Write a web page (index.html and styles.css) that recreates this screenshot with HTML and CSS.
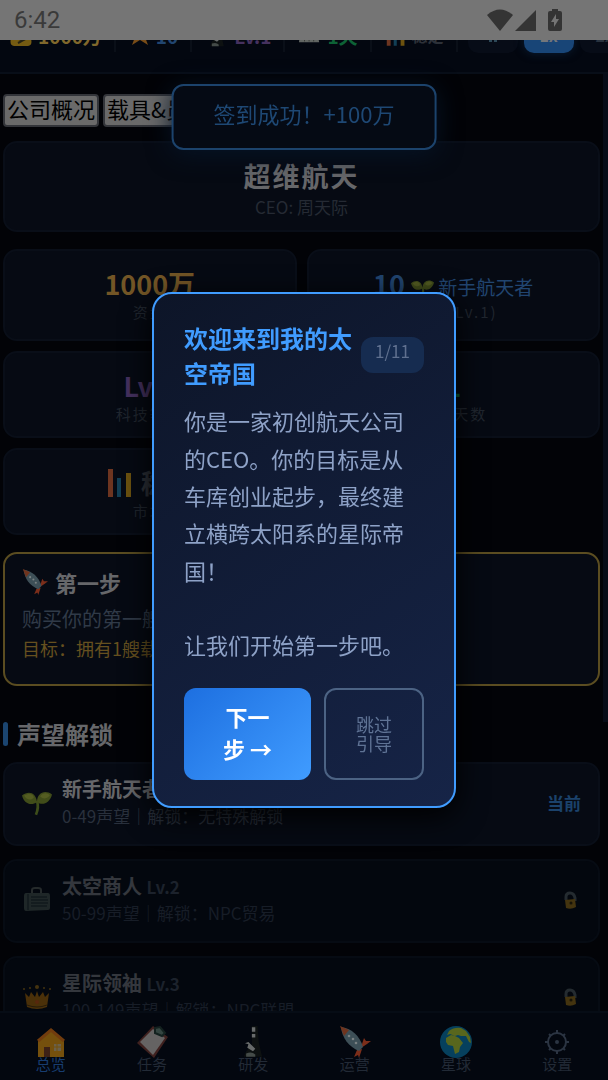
FILE: index.html
```html
<!DOCTYPE html>
<html lang="zh-CN">
<head>
    <meta charset="UTF-8">
    <meta name="viewport" content="width=device-width, initial-scale=1.0">
    <title>我的太空帝国</title>
    <link rel="stylesheet" href="styles.css">
</head>
<body>
    <!-- shared icons -->
    <svg class="sprite" aria-hidden="true">
        <symbol id="i-rocket" viewBox="0 0 32 32">
            <path fill="#7c2e1a" d="M18 24l-3 7 4-2 1 3 3-9zM23 18l2-6 2 3 5 0-4 3-6 4z"/>
            <path fill="#3d4f57" d="M2 1c10 1 19 9 22 20l-4 4C10 21 3 12 2 1z"/>
            <path fill="#6f341e" d="M1 0l9 4-5 6z"/>
            <circle cx="10" cy="10" r="1.3" fill="#788082"/><circle cx="14" cy="13" r="1.3" fill="#788082"/><circle cx="17" cy="17" r="1.3" fill="#788082"/>
        </symbol>
        <symbol id="i-seed" viewBox="0 0 28 24">
            <path d="M14 10q2 6-1 13" fill="none" stroke="#3d4d1a" stroke-width="2.5"/>
            <path fill="#414d1a" d="M14 11C9 15 2 13 0 5c6-5 13-3 14 6zM14 11c0-8 7-12 14-7-2 8-9 11-14 7z"/>
            <path fill="#545d22" d="M2 5c5-3 9-1 9 2-3 3-7 2-9-2zM17 6c2-4 7-4 9-1-3 3-6 4-9 1z"/>
        </symbol>
        <symbol id="i-chart" viewBox="0 0 26 30">
            <path fill="#6d3520" d="M1 1h5v28H1z"/><path fill="#123f55" d="M10 10h4v19h-4z"/><path fill="#6c520f" d="M19 5h5v24h-5z"/>
        </symbol>
        <symbol id="i-lock" viewBox="0 0 14 18">
            <path d="M3 9V6q0-4 4-4t5 5v3" fill="none" stroke="#242b30" stroke-width="3"/>
            <path fill="#44340f" d="M2 9l10-1 1 8q-5 3-10 1z"/><circle cx="8" cy="12" r="1.5" fill="#171308"/>
        </symbol>
        <symbol id="i-microscope" viewBox="0 0 20 28">
            <path fill="#0d1111" d="M9 0h5l1 14 3 13H2l2-5 5-5z"/>
            <path fill="#686b6b" d="M9 1h3v4H9zM9 7h3v3H9zM3 15l3-1 6 6-2 2-5-3 1-3z"/>
            <path fill="#444b48" d="M4 24q5-2 8 1v2H4z"/>
        </symbol>
    </svg>

    <div class="statusbar">
        <span>6:42</span>
        <span class="status-icons">
            <svg width="26" height="22" viewBox="0 0 26 22"><path d="M0 6Q13-5 26 6L13 22z"/></svg>
            <svg width="21" height="21" viewBox="0 0 21 21"><path d="M21 0v21H0z"/></svg>
            <svg class="battery" width="14" height="22" viewBox="0 0 14 22"><path d="M4 0h6v2h2q2 0 2 2v16q0 2-2 2H2q-2 0-2-2V4q0-2 2-2h2z"/><path fill="#757575" d="M8 5l-5 8h3v5l5-8H8z"/></svg>
        </span>
    </div>

    <header class="topbar">
        <div class="stat gold"><svg width="22" height="22" viewBox="0 0 22 22"><path fill="#755b12" d="M7 0h8l-1 5c8 6 10 17 4 17H4c-6 0-4-11 4-17z"/><path fill="none" stroke="#262313" stroke-width="2" d="M14 9q-6-2-6 3t6 3-6 4"/></svg>1000万</div>
        <div class="stat blue"><svg width="20" height="20" viewBox="0 0 20 20"><path fill="#784c18" d="M10 0l3 7h7l-5 5 3 8-8-5-8 5 3-8-5-5h7z"/></svg>10</div>
        <div class="stat purple"><svg width="22" height="24"><use href="#i-microscope"/></svg>Lv.1</div>
        <div class="stat green"><svg width="22" height="20" viewBox="0 0 24 20"><path fill="#626663" d="M2 2h17l3 16H0z"/><path stroke="#343735" d="M2 7h18M1 12h20M6 3v14M11 3v14M16 3v14"/></svg>1天</div>
        <div class="stat muted"><svg width="20" height="24"><use href="#i-chart"/></svg>稳定</div>
        <div class="speed">
            <button aria-label="暂停"><svg width="10" height="12" viewBox="0 0 10 12"><path fill="#2d4857" d="M1 0h3v12H1zM6 0h3v12H6z"/></svg></button>
            <button class="active">1x</button>
            <button>2x</button>
        </div>
    </header>

    <main>
        <div class="tabs">
            <button>公司概况</button>
            <button>载具&amp;员工</button>
            <button>市场情报</button>
            <button>财务与报表</button>
        </div>

        <section class="card company">
            <h1>超维航天</h1>
            <p>CEO: 周天际</p>
        </section>

        <section class="stats">
            <div class="card stat-card tall">
                <div class="value gold">1000万</div>
                <div class="label">资金</div>
            </div>
            <div class="card stat-card tall">
                <div class="value blue">10 <small><svg width="23" height="20"><use href="#i-seed"/></svg> 新手航天者</small></div>
                <div class="label">声望 (Lv.1)</div>
            </div>
            <div class="card stat-card">
                <div class="value purple">Lv.1</div>
                <div class="label">科技等级</div>
            </div>
            <div class="card stat-card">
                <div class="value green">1</div>
                <div class="label">运营天数</div>
            </div>
            <div class="card stat-card">
                <div class="value muted"><svg width="30" height="30"><use href="#i-chart"/></svg> 稳定</div>
                <div class="label">市场</div>
            </div>
        </section>

        <section class="card goal">
            <h3><svg width="26" height="26"><use href="#i-rocket"/></svg>第一步</h3>
            <p>购买你的第一艘载具</p>
            <p class="target">目标：拥有1艘载具</p>
        </section>

        <h2>声望解锁</h2>
        <ul class="unlocks">
            <li class="card unlock">
                <svg width="30" height="26"><use href="#i-seed"/></svg>
                <div class="info">
                    <h4>新手航天者 <span>Lv.1</span></h4>
                    <p>0-49声望｜解锁：无特殊解锁</p>
                </div>
                <strong>当前</strong>
            </li>
            <li class="card unlock locked">
                <svg width="30" height="26" viewBox="0 0 30 26"><path fill="none" stroke="#252a2b" stroke-width="2" d="M10 6V3q0-2 3-2h3q3 0 3 2v3"/><path fill="#1f2728" d="M4 6h22q2 0 2 3v12q0 2-2 2L4 24q-2 0-2-3V9q0-3 2-3z"/><path stroke="#0b1217" d="M6 7v16M9 10h16M9 13h17M9 16h17M9 19h16"/></svg>
                <div class="info">
                    <h4>太空商人 <span>Lv.2</span></h4>
                    <p>50-99声望｜解锁：NPC贸易</p>
                </div>
                <svg width="14" height="18"><use href="#i-lock"/></svg>
            </li>
            <li class="card unlock locked">
                <svg width="30" height="26" viewBox="0 0 30 26"><path fill="#4a3009" d="M3 9l4 4 2-5 4 5 2-6 2 6 4-5 2 5 4-4-2 14q-10 4-20 0z"/><g fill="#45330f"><circle cx="2" cy="5" r="1"/><circle cx="8" cy="4" r="1"/><circle cx="15" cy="3" r="2"/><circle cx="22" cy="4" r="1"/><circle cx="28" cy="5" r="1"/></g><path stroke="#271c09" fill="none" d="M5 21q10 4 20 0"/><circle cx="15" cy="18" r="2" fill="#58270d"/></svg>
                <div class="info">
                    <h4>星际领袖 <span>Lv.3</span></h4>
                    <p>100-149声望｜解锁：NPC联盟</p>
                </div>
                <svg width="14" height="18"><use href="#i-lock"/></svg>
            </li>
        </ul>
    </main>

    <div class="scrollbar"></div>

    <nav>
        <a href="#" class="active"><svg width="32" height="32" viewBox="0 0 32 32"><path fill="#75500d" d="M3 14L16 3l13 11v17H3z"/><path fill="none" stroke="#713c0e" stroke-width="3" d="M3 15L16 4l13 11"/><path fill="#3d2116" d="M9 21h6v10H9z"/><path fill="#6a604b" d="M19 18h7v7h-7z"/><path stroke="#75500d" d="M22 18v7M19 21h7"/></svg>总览</a>
        <a href="#"><svg width="32" height="32" viewBox="0 0 32 32"><path fill="#3f211f" d="M17 0l15 11-14 21L1 17z"/><path fill="#656363" d="M17 3l12 9-12 17L4 16z"/><path fill="#344541" stroke="#13211f" stroke-width="2" d="M19 2l5-1 5 6-3 3-7-3z"/></svg>任务</a>
        <a href="#"><svg width="32" height="30"><use href="#i-microscope"/></svg>研发</a>
        <a href="#"><svg width="32" height="32"><use href="#i-rocket"/></svg>运营</a>
        <a href="#"><svg width="32" height="32" viewBox="0 0 32 32"><circle cx="16" cy="16" r="16" fill="#06405d"/><path fill="#58661d" d="M9 5q5-4 12-3l5 3 4 6 1 6-2-1-3-6-5 0-3-1-3 1-5-2-3 1zM6 12l5-3 4 1 4 2 4 5-3 4-1 5-4 2-2-8-5-1-2-3z"/></svg>星球</a>
        <a href="#"><svg width="32" height="32" viewBox="0 0 32 32" fill="none" stroke="#2b3442" stroke-width="2"><circle cx="16" cy="16" r="9"/><circle cx="16" cy="16" r="1" fill="#2b3442"/><path d="M16 7V4M16 28v-3M7 16H4M28 16h-3M10 10L8 8M22 10l2-2M10 22l-2 2M22 22l2 2"/></svg>设置</a>
    </nav>

    <div class="toast">签到成功！+100万</div>

    <div class="overlay">
        <div class="modal" role="dialog" aria-labelledby="guide-title">
            <div class="modal-head">
                <h2 id="guide-title">欢迎来到我的太空帝国</h2>
                <span class="step">1/11</span>
            </div>
            <p>你是一家初创航天公司的CEO。你的目标是从车库创业起步，最终建立横跨太阳系的星际帝国！<br><br>让我们开始第一步吧。</p>
            <div class="actions">
                <button class="next">下一步 →</button>
                <button class="skip">跳过引导</button>
            </div>
        </div>
    </div>
</body>
</html>
```

FILE: styles.css
```css
* {
    box-sizing: border-box;
}

body {
    margin: 0;
    height: 100vh;
    display: flex;
    flex-direction: column;
    overflow: hidden;
    background: #020307;
    color: #66676a;
    font-family: "Noto Sans CJK SC", sans-serif;
}

h1, h2, h3, h4, p, ul {
    margin: 0;
    padding: 0;
}

button {
    font-family: inherit;
}

.sprite {
    position: absolute;
    width: 0;
    height: 0;
}

.gold { color: #735626; }
.blue { color: #214570; }
.purple { color: #45315f; }
.green { color: #0d6236; }
.muted { color: #2d3138; }

/* phone status bar, covers the upper part of the top bar */
.statusbar {
    position: fixed;
    top: 0;
    left: 0;
    right: 0;
    z-index: 5;
    height: 40px;
    padding: 0 46px 0 14px;
    display: flex;
    align-items: center;
    justify-content: space-between;
    background: #757575;
    color: #3a3a3a;
    font-family: Roboto, sans-serif;
    font-size: 24px;
}

.status-icons {
    display: flex;
    align-items: center;
    gap: 2px;
    fill: #343434;
}

.battery {
    margin-left: 10px;
}

.topbar {
    flex: none;
    height: 74px;
    padding: 0 0 2px 10px;
    display: flex;
    align-items: center;
    background: #030710;
    border-bottom: 2px solid #080e18;
    overflow: hidden;
}

.stat {
    flex: none;
    display: flex;
    align-items: center;
    gap: 6px;
    height: 34px;
    padding-right: 12px;
    margin-right: 14px;
    border-right: 2px solid #0a0f18;
    font-size: 19px;
    font-weight: bold;
}

.stat.gold { color: #80682c; }

.stat.muted {
    margin-right: 10px;
    font-size: 16px;
}

.speed {
    flex: none;
    display: flex;
    gap: 6px;
}

.speed button {
    width: 50px;
    height: 36px;
    border: 0;
    border-radius: 10px;
    background: #070c17;
    color: #29333f;
    font-size: 16px;
    font-weight: bold;
}

.speed .active {
    background: #184577;
    color: #73777b;
    box-shadow: 0 0 10px #0a1e35;
}

main {
    flex: 1;
    min-height: 0;
    overflow: hidden;
    padding: 20px 8px 0 3px;
}

.tabs {
    display: flex;
    gap: 4px;
    margin-bottom: 14px;
}

.tabs button {
    height: 33px;
    padding: 0 2px 4px;
    border: 2px solid #33353a;
    border-radius: 4px;
    background: #6a6a6a;
    color: #000;
    font-size: 22px;
    line-height: 25px;
    white-space: nowrap;
}

.card {
    border: 2px solid #090e18;
    border-radius: 14px;
    background: #060a13;
}

.company {
    height: 91px;
    margin-bottom: 17px;
    padding-top: 13px;
    text-align: center;
}

.company h1 {
    font-size: 27px;
    line-height: 40px;
    letter-spacing: 2px;
}

.company p {
    color: #252a34;
    font-size: 17px;
    line-height: 22px;
}

.stats {
    display: grid;
    grid-template-columns: 1fr 1fr;
    gap: 10px;
    margin-bottom: 17px;
}

.stat-card {
    height: 87px;
    padding-top: 14px;
    text-align: center;
}

.stat-card.tall {
    height: 92px;
}

.value {
    height: 38px;
    font-size: 27px;
    font-weight: bold;
    line-height: 38px;
}

.value svg {
    vertical-align: -4px;
}

.value small {
    font-size: 19px;
    font-weight: normal;
}

.label {
    color: #20262f;
    font-size: 15px;
    line-height: 18px;
    letter-spacing: 2px;
}

.goal {
    height: 134px;
    margin-bottom: 29px;
    padding: 10px 17px;
    border-color: #5b4d21;
}

.goal h3 {
    display: flex;
    align-items: center;
    gap: 7px;
    font-size: 22px;
    line-height: 36px;
}

.goal p {
    color: #303a48;
    font-size: 20px;
    line-height: 38px;
}

.goal .target {
    color: #65501f;
    font-size: 18px;
    line-height: 20px;
}

main > h2 {
    display: flex;
    align-items: center;
    gap: 9px;
    margin-bottom: 9px;
    font-size: 24px;
    line-height: 38px;
}

main > h2::before {
    content: "";
    width: 5px;
    height: 24px;
    border-radius: 3px;
    background: #1b4570;
}

.unlocks {
    list-style: none;
}

.unlock {
    display: flex;
    align-items: center;
    gap: 10px;
    height: 84px;
    margin-bottom: 13px;
    padding: 0 17px 2px;
}

.unlock .info {
    flex: 1;
    padding-bottom: 2px;
}

.unlock h4 {
    font-size: 20px;
    line-height: 26px;
}

.unlock h4 span {
    color: #343a44;
    font-size: 17px;
}

.unlock p {
    color: #29303c;
    font-size: 17px;
    line-height: 26px;
}

.unlock strong {
    padding-bottom: 2px;
    color: #1b426b;
    font-size: 17px;
}

.locked {
    background: #03070e;
    border-color: #060b13;
}

.locked h4 {
    color: #34373d;
}

.locked h4 span {
    color: #1c222c;
}

.locked p {
    color: #171d27;
}

.locked > svg:last-child {
    margin-right: 4px;
}

/* scroll thumb over the right edge of the page */
.scrollbar {
    position: fixed;
    top: 74px;
    right: 0;
    width: 5px;
    height: 60vh;
    background: #070c17;
}

nav {
    flex: none;
    display: grid;
    grid-template-columns: repeat(6, 1fr);
    height: 69px;
    padding-top: 13px;
    background: #03070f;
    border-top: 2px solid #060c15;
}

nav a {
    display: flex;
    flex-direction: column;
    align-items: center;
    color: #222a36;
    font-size: 15px;
    line-height: 11px;
    text-decoration: none;
}

nav svg {
    flex: none;
    height: 32px;
}

nav .active {
    color: #173d70;
}

.toast {
    position: fixed;
    top: 84px;
    left: 50%;
    z-index: 6;
    padding: 11px 40px 19px;
    transform: translateX(-50%);
    border: 2px solid #1c436c;
    border-radius: 12px;
    background: #050a14;
    box-shadow: 0 4px 24px #061426;
    color: #1e4874;
    font-size: 22px;
    line-height: 32px;
    white-space: nowrap;
}

.overlay {
    position: fixed;
    inset: 0;
    z-index: 10;
    display: flex;
    align-items: center;
    justify-content: center;
    padding-top: 20px;
}

.modal {
    width: 50%;
    padding: 26px 30px;
    border: 2px solid #409cff;
    border-radius: 20px;
    background: linear-gradient(145deg, #0d1528, #162447);
    box-shadow: 0 8px 30px #000;
}

.modal-head {
    display: flex;
    align-items: center;
    justify-content: space-between;
    gap: 8px;
    margin-bottom: 12px;
}

.modal-head h2 {
    color: #409cff;
    font-size: 24px;
    line-height: 35px;
}

.step {
    flex: none;
    padding: 1px 14px 9px;
    border-radius: 12px;
    background: #162c50;
    color: #5f708f;
    font-size: 17px;
    line-height: 26px;
}

.modal p {
    margin-bottom: 24px;
    color: #8ea2c7;
    font-size: 22px;
    line-height: 1.7;
}

.actions {
    display: flex;
    gap: 13px;
}

.actions button {
    border-radius: 12px;
    cursor: pointer;
}

.next {
    flex: 4;
    padding: 12px 34px 16px;
    border: 0;
    background: linear-gradient(135deg, #1d6fe0, #409cff);
    color: #fff;
    font-size: 22px;
    font-weight: bold;
    line-height: 32px;
}

.skip {
    flex: 3;
    padding: 14px 26px;
    border: 2px solid #4c6384;
    background: transparent;
    color: #5f7395;
    font-size: 18px;
    line-height: 19px;
}
```
